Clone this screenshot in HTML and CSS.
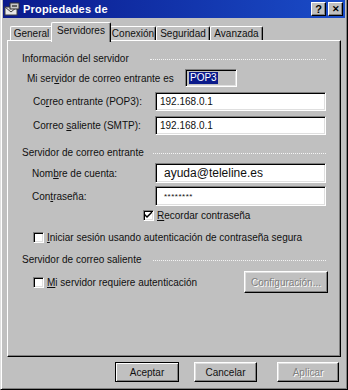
FILE: index.html
```html
<!doctype html>
<html>
<head>
	<meta charset="utf-8">
	<link rel="stylesheet" href="styles.css">
</head>
<body>

<div class="window">
	<div class="titlebar">
		<svg class="app-icon" width="16" height="14" viewBox="0 0 16 14">
			<rect x="1" y="5" width="12" height="8" fill="#e8e8e8" stroke="#404040"/>
			<path d="M1 5 L7 10 L13 5" fill="none" stroke="#404040"/>
			<rect x="6" y="1" width="9" height="6" fill="#c8c8c8" stroke="#303030"/>
			<rect x="8" y="3" width="5" height="2" fill="#606060"/>
		</svg>
		<span class="title">Propiedades de</span>
		<div class="controls">
			<span class="ctl">?</span>
			<span class="ctl close">&#x2715;</span>
		</div>
	</div>

	<div class="tabs">
		<div class="tab tab-general">General</div>
		<div class="tab tab-servers active">Servidores</div>
		<div class="tab tab-conn">Conexión</div>
		<div class="tab tab-sec">Seguridad</div>
		<div class="tab tab-adv">Avanzada</div>
	</div>

	<div class="panel">
		<div class="legend legend-info"><span>Información del servidor</span><i class="rule"></i></div>

		<div class="row row-type">
			<label class="lbl lbl-type">Mi ser<u>v</u>idor de correo entrante es</label>
			<span class="readonly"><span class="sel">POP3</span></span>
		</div>
		<div class="row row-field">
			<label class="lbl lbl-server">Co<u>r</u>reo entrante (POP3):</label>
			<span class="field">192.168.0.1</span>
		</div>
		<div class="row row-field">
			<label class="lbl lbl-server">Correo <u>s</u>aliente (SMTP):</label>
			<span class="field">192.168.0.1</span>
		</div>

		<div class="legend legend-in"><span>Servidor de correo entrante</span><i class="rule"></i></div>

		<div class="row row-account">
			<label class="lbl lbl-account">Nom<u>b</u>re de cuenta:</label>
			<span class="field big">ayuda@teleline.es</span>
		</div>
		<div class="row row-pass">
			<label class="lbl lbl-account">Con<u>t</u>raseña:</label>
			<span class="field pass">********</span>
		</div>

		<div class="check check-remember">
			<span class="box">
				<svg width="7" height="7" viewBox="0 0 7 7"><path d="M0 2 L0 4 L2 6 L7 1 L7 -1 L2 4 Z" fill="#000"/></svg>
			</span>
			<span><u>R</u>ecordar contraseña</span>
		</div>
		<div class="check check-spa">
			<span class="box"></span>
			<span><u>I</u>niciar sesión usando autenticación de contraseña segura</span>
		</div>

		<div class="legend legend-out"><span>Servidor de correo saliente</span><i class="rule"></i></div>

		<div class="check check-auth">
			<span class="box"></span>
			<span><u>M</u>i servidor requiere autenticación</span>
			<span class="btn disabled config">Configuración...</span>
		</div>
	</div>

	<div class="actions">
		<span class="btn default accept">Aceptar</span>
		<span class="btn cancel">Cancelar</span>
		<span class="btn disabled apply">Aplicar</span>
	</div>
</div>

</body>
</html>
```

FILE: styles.css
```css
body {
    margin: 0;
    font-family: "Liberation Sans", Arial, sans-serif;
    font-size: 10px;
    color: #101010;
    background: #c0c0c0;
}

u {
    text-decoration: underline;
}

.window {
    width: 348px;
    height: 390px;
    box-sizing: border-box;
    background: #c0c0c0;
    padding: 0 2px;
    border-left: 1px solid #dfdfdf;
    border-right: 1px solid #000;
    border-bottom: 1px solid #000;
    box-shadow: inset 1px 0 #fff, inset -1px -1px #808080;
}

.titlebar {
    height: 18px;
    display: flex;
    align-items: center;
    padding: 0 2px 0 1px;
    background: linear-gradient(90deg, #0a1a8c, #1a4cc8);
    color: #fff;
}

.app-icon {
    margin-right: 3px;
}

.title {
    font-weight: bold;
    font-size: 11px;
    letter-spacing: 0.2px;
}

.controls {
    margin-left: auto;
    display: flex;
    gap: 2px;
}

.ctl {
    width: 15px;
    height: 14px;
    box-sizing: border-box;
    background: #c0c0c0;
    color: #000;
    font-weight: bold;
    font-size: 11px;
    line-height: 12px;
    text-align: center;
    border: 1px solid;
    border-color: #fff #000 #000 #fff;
    box-shadow: inset -1px -1px #808080;
}

.ctl.close {
    font-size: 9px;
}

.tabs {
    height: 22px;
    display: flex;
    align-items: flex-end;
    padding-left: 5px;
}

.tab {
    height: 14px;
    box-sizing: border-box;
    line-height: 13px;
    text-align: center;
    border: 1px solid;
    border-bottom: none;
    border-color: #fff #000 #000 #fff;
    box-shadow: inset -1px 0 #808080;
    border-radius: 2px 2px 0 0;
}

.tab-general { width: 43px; margin-left: 2px; }
.tab-conn { width: 46px; }
.tab-sec { width: 54px; }
.tab-adv { width: 53px; }

.tab.active {
    width: 60px;
    height: 20px;
    line-height: 15px;
    margin: 0 -1px -2px -2px;
    padding-bottom: 2px;
    position: relative;
    z-index: 1;
    background: #c0c0c0;
}

.panel {
    height: 317px;
    box-sizing: border-box;
    margin: 0 4px;
    padding: 0 14px;
    border: 1px solid;
    border-color: #fff #000 #000 #fff;
    box-shadow: inset -1px -1px #808080;
}

.legend {
    height: 12px;
    line-height: 12px;
    display: flex;
    align-items: center;
}

.legend span {
    flex: none;
    width: 128px;
}

.legend .rule {
    flex: 1;
    border-top: 1px dotted #f4f4f4;
}

.legend-in span,
.legend-out span {
    width: 131px;
}

.legend-info { margin-top: 12px; }
.legend-in { margin-top: 12px; }
.legend-out { margin-top: 11px; }

.row {
    display: flex;
    align-items: center;
}

.lbl {
    flex: none;
    box-sizing: border-box;
}

.lbl-type {
    width: 163px;
    padding-left: 5px;
}

.lbl-server {
    width: 133px;
    padding-left: 11px;
}

.lbl-account {
    width: 133px;
    padding-left: 10px;
}

.row-type {
    height: 18px;
    margin-top: 4px;
}

.row-field {
    height: 19px;
    margin-top: 5px;
}

.row-account {
    height: 20px;
    margin-top: 4px;
}

.row-pass {
    height: 20px;
    margin-top: 3px;
}

.readonly,
.field {
    height: 100%;
    box-sizing: border-box;
    display: flex;
    align-items: center;
    border: 1px solid;
    border-color: #808080 #fff #fff #808080;
    box-shadow: inset 1px 1px #000, inset -1px -1px #dfdfdf;
}

.readonly {
    width: 52px;
    padding-left: 3px;
}

.sel {
    background: #0a1a8a;
    color: #fff;
    padding: 0 1px;
    line-height: 12px;
}

.field {
    flex: 1;
    background: #fff;
    padding-left: 4px;
}

.field.big {
    font-size: 12px;
    padding-left: 8px;
}

.field.pass {
    font-size: 8px;
    padding-left: 8px;
    letter-spacing: 0.5px;
}

.check {
    display: flex;
    align-items: center;
    gap: 3px;
    height: 12px;
}

.box {
    width: 11px;
    height: 11px;
    box-sizing: border-box;
    background: #fff;
    display: flex;
    align-items: center;
    justify-content: center;
    border: 1px solid;
    border-color: #808080 #fff #fff #808080;
    box-shadow: inset 1px 1px #000, inset -1px -1px #dfdfdf;
}

.check-remember {
    margin-top: 3px;
    padding-left: 121px;
}

.check-spa {
    margin-top: 10px;
    padding-left: 11px;
}

.check-auth {
    height: 22px;
    margin-top: 5px;
    padding-left: 11px;
}

.btn {
    height: 20px;
    box-sizing: border-box;
    display: flex;
    align-items: center;
    justify-content: center;
    background: #c0c0c0;
    border: 1px solid;
    border-color: #fff #000 #000 #fff;
    box-shadow: inset -1px -1px #808080, inset 1px 1px #dfdfdf;
}

.btn.disabled {
    color: #808080;
    text-shadow: 1px 1px #fff;
}

.config {
    margin-left: auto;
    margin-right: -2px;
    width: 84px;
    height: 22px;
}

.actions {
    display: flex;
    justify-content: flex-end;
    margin-top: 5px;
    padding-right: 6px;
}

.btn.default {
    border: 1px solid #000;
    box-shadow: inset 1px 1px #fff, inset -1px -1px #808080;
}

.accept { width: 64px; }
.cancel { width: 63px; margin-left: 15px; }
.apply { width: 62px; margin-left: 20px; }
```
